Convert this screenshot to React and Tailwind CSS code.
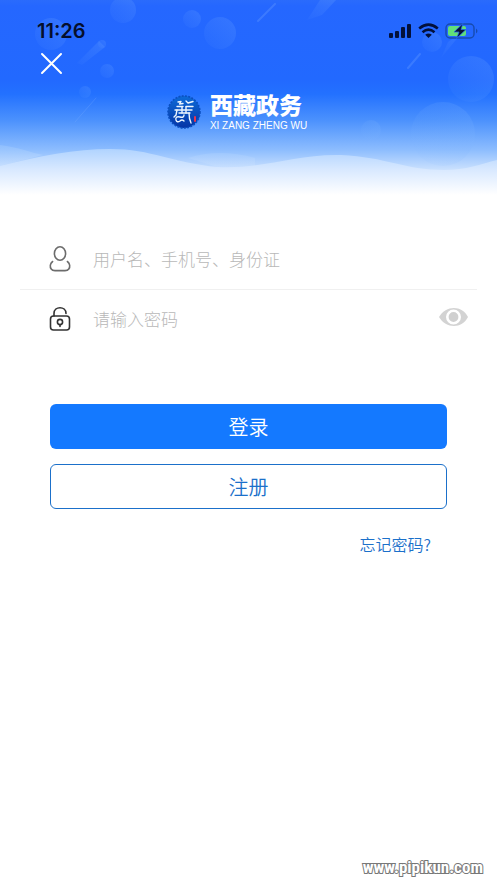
import React, { useState } from "react";

const HeaderBackground = () => (
  <svg
    className="absolute inset-0 h-full w-full"
    viewBox="0 0 497 200"
    preserveAspectRatio="none"
    aria-hidden="true"
  >
    <defs>
      <linearGradient id="sky" x1="0" y1="0" x2="0" y2="1">
        <stop offset="0" stopColor="#2a6bfc" />
        <stop offset="0.03" stopColor="#2567ff" />
        <stop offset="0.4" stopColor="#2269ff" />
        <stop offset="0.47" stopColor="#2371ff" />
        <stop offset="0.6" stopColor="#4b91fd" />
        <stop offset="0.75" stopColor="#8dbdfe" />
        <stop offset="0.85" stopColor="#cbe1fe" />
        <stop offset="0.97" stopColor="#ffffff" />
      </linearGradient>
      <linearGradient id="wave" gradientUnits="userSpaceOnUse" x1="0" y1="145" x2="0" y2="195">
        <stop offset="0" stopColor="#a8cfff" />
        <stop offset="0.5" stopColor="#d9e9ff" />
        <stop offset="1" stopColor="#ffffff" />
      </linearGradient>
      <linearGradient id="bubble" x1="1" y1="0" x2="0" y2="1">
        <stop offset="0" stopColor="#7db4ff" stopOpacity="0.2" />
        <stop offset="1" stopColor="#7db4ff" stopOpacity="0.03" />
      </linearGradient>
    </defs>
    <rect width="497" height="200" fill="url(#sky)" />
    <g fill="url(#bubble)">
      <circle cx="123" cy="10" r="13" />
      <circle cx="192" cy="19" r="9" />
      <circle cx="220" cy="33" r="16" />
      <circle cx="51" cy="34" r="16" />
      <circle cx="107" cy="71" r="7" />
      <circle cx="85" cy="92" r="6" />
      <circle cx="102" cy="44" r="4" />
      <circle cx="371" cy="130" r="10" />
      <circle cx="432" cy="42" r="10" />
      <circle cx="471" cy="79" r="23" />
      <circle cx="443" cy="134" r="32" />
      <path d="M99 41 L105 47 L82 65 L77 63Z" />
      <path d="M320 0 L336 0 L322 15 L307 20Z" />
      <path d="M448 42 L464 30 L441 58Z" />
    </g>
    <g stroke="#80b2ff" strokeLinecap="round" opacity="0.25">
      <path d="M275 4 L258 21" strokeWidth="2" />
      <path d="M420 54 L408 68" strokeWidth="2" />
      <path d="M96 98 L75 122" />
    </g>
    <path d="M0 145 C18 147 32 153 43 155 L0 166Z" fill="url(#wave)" opacity="0.35" />
    <path d="M188 158 C210 151 232 152 255 158 L255 175 L218 167Z" fill="url(#wave)" opacity="0.25" />
    <path
      d="M0 166 C38 156 76 149 110 149 C152 149 172 163 218 167 C266 169 294 154 341 155 C386 157 405 170 444 170 C466 170 481 164 497 160 L497 200 L0 200Z"
      fill="url(#wave)"
    />
  </svg>
);

const StatusIcons = () => (
  <svg className="h-5 w-24" viewBox="1 1 96 20" aria-hidden="true">
    <g fill="#03103a">
      <rect x="4" y="13" width="4" height="5" rx="1" />
      <rect x="10" y="11" width="4" height="7" rx="1" />
      <rect x="16" y="7" width="4" height="11" rx="1" />
      <rect x="22" y="4" width="4" height="14" rx="1" />
      <path d="M43.500 18 L40.200 14.800 Q43.500 12.200 46.800 14.800Z" />
    </g>
    <g fill="none" stroke="#03103a" strokeWidth="2.600">
      <path d="M34.200 8.500 Q43.500 .8 52.800 8.500" />
      <path d="M37.500 12.200 Q43.500 7.200 49.500 12.200" />
    </g>
    <rect x="61" y="4" width="28" height="14" rx="4" fill="none" stroke="#174bae" strokeWidth="1.400" />
    <path d="M91 8.500 Q94 11 91 13.500Z" fill="#174bae" />
    <rect x="63" y="6" width="18" height="10" rx="2" fill="#62df78" />
    <path d="M78 3.500 L69 12 H74 L71.500 18.500 L81 9.500 H76Z" fill="#071431" stroke="#2769ed" strokeWidth=".8" />
  </svg>
);

const Emblem = () => (
  <svg className="h-9 w-9" viewBox="0 0 36 36" aria-hidden="true">
    <defs>
      <linearGradient id="seal" x1="0" y1="0" x2="0" y2="1">
        <stop offset="0" stopColor="#0d6bd8" />
        <stop offset="1" stopColor="#0634a6" />
      </linearGradient>
    </defs>
    <circle cx="18" cy="18" r="16" fill="url(#seal)" />
    <circle cx="18" cy="18" r="16" fill="none" stroke="#0b4fc0" strokeWidth="1.600" strokeDasharray="2 1.300" />
    <g fill="none" stroke="#eef6ff" strokeWidth="1.400" strokeLinecap="round" strokeLinejoin="round">
      <path d="M12 8 L15 7.500 L13.500 10 L17 9.500 M20 7 L22 9 L27 7.500" />
      <path d="M11 12.500 H17 M20 12.500 H27 M9 16 H26 M13 19 H24" />
      <path d="M11 16 L10 21 L8 23 M16 13 V19 M20 13 V19" />
      <path d="M18 21 Q18 24 14 23 Q9 22 10 26 Q11 29 14 27 Q16 25 18 27 M23 19 Q23 25 25 29" />
    </g>
    <rect x="28" y="22" width="2" height="6" rx="1" fill="#e63450" />
  </svg>
);

const UserIcon = () => (
  <svg className="h-7 w-6" viewBox="0 0 24 28" fill="none" stroke="#6c6c6c" strokeWidth="1.600" strokeLinecap="round" aria-hidden="true">
    <ellipse cx="12" cy="8.500" rx="5.600" ry="6.800" />
    <path d="M4.600 16.500 C1.800 18.500 1.800 22 3.200 24 Q4.300 25.600 7 25.600 H17 Q19.700 25.600 20.800 24 C22.200 22 22.200 18.500 19.400 16.500" />
  </svg>
);

const LockIcon = () => (
  <svg className="h-7 w-6" viewBox="0 0 24 28" fill="none" stroke="#333333" strokeWidth="1.600" strokeLinecap="round" aria-hidden="true">
    <rect x="2.500" y="11" width="19" height="14" rx="3" />
    <path d="M6 11 V8.500 C6 .8 18 .8 18 8.500" />
    <circle cx="12" cy="17" r="2.600" />
    <path d="M12 19.800 V21.500" />
  </svg>
);

const EyeIcon = () => (
  <svg className="h-5 w-8" viewBox="0 0 32 20" aria-hidden="true">
    <path d="M2 10 C9 -2 25 -2 31 10 C25 22 9 22 2 10Z" fill="#d3d3d3" />
    <circle cx="16.500" cy="10" r="6.200" fill="#d0d0d0" stroke="#ffffff" strokeWidth="2.600" />
  </svg>
);

export default function App() {
  const [username, setUsername] = useState("");
  const [password, setPassword] = useState("");
  const [showPassword, setShowPassword] = useState(false);

  const handleSubmit = (e) => {
    e.preventDefault();
  };

  return (
    <div className="flex min-h-screen flex-col bg-white font-['Inter','Noto_Sans_CJK_SC',sans-serif]">
      <header className="relative h-[200px]">
        <HeaderBackground />
        <div className="relative">
          <div className="flex items-center justify-between pt-[19px] pr-[15px] pl-[37px]">
            <span className="text-[20px] leading-6 font-semibold text-[#050f2c]">11:26</span>
            <StatusIcons />
          </div>
          <div className="flex px-10 pt-[9px]">
            <button type="button" aria-label="关闭" className="h-6 w-6">
              <svg className="h-6 w-6" viewBox="0 0 24 24" fill="none" stroke="white" strokeWidth="2" strokeLinecap="round">
                <path d="M2 2 L21 21 M21 2 L2 21" />
              </svg>
            </button>
          </div>
          <div className="flex items-center justify-center gap-2 pt-4 pr-6">
            <Emblem />
            <div className="text-white">
              <h1 className="font-['Liberation_Sans','Noto_Sans_CJK_SC',sans-serif] text-[23px] leading-7 font-black">西藏政务</h1>
              <p className="font-['Liberation_Sans',sans-serif] text-[10px] leading-3 whitespace-nowrap">XI ZANG ZHENG WU</p>
            </div>
          </div>
        </div>
      </header>

      <main className="flex-1">
        <form onSubmit={handleSubmit} className="pt-[29px]">
          <div className="mx-5 flex h-[61px] items-center border-b border-[#f0f0f0] pl-7">
            <label htmlFor="username" aria-label="用户名">
              <UserIcon />
            </label>
            <input
              id="username"
              type="text"
              value={username}
              onChange={(e) => setUsername(e.target.value)}
              placeholder="用户名、手机号、身份证"
              className="ml-[21px] min-w-0 flex-1 font-['Noto_Sans_CJK_SC',sans-serif] text-[17px] font-light outline-none placeholder:text-[#b8b8b8]"
            />
          </div>
          <div className="mx-5 flex h-[57px] items-center pl-7">
            <label htmlFor="password" aria-label="密码">
              <LockIcon />
            </label>
            <input
              id="password"
              type={showPassword ? "text" : "password"}
              value={password}
              onChange={(e) => setPassword(e.target.value)}
              placeholder="请输入密码"
              className="ml-[21px] min-w-0 flex-1 font-['Noto_Sans_CJK_SC',sans-serif] text-[17px] font-light outline-none placeholder:text-[#b8b8b8]"
            />
            <button
              type="button"
              aria-label="显示密码"
              onClick={() => setShowPassword(!showPassword)}
              className="mr-2 pb-1"
            >
              <EyeIcon />
            </button>
          </div>

          <div className="flex flex-col gap-[15px] px-[50px] pt-[57px] font-['Noto_Sans_CJK_SC',sans-serif]">
            <button type="submit" className="h-[45px] rounded-md bg-[#1479ff] text-[20px] font-[350] text-white">
              登录
            </button>
            <button type="button" className="h-[45px] rounded-md border border-[#1b70ca] text-[20px] font-[350] text-[#1b70ca]">
              注册
            </button>
          </div>
          <div className="flex justify-end pt-[23px] pr-[66px]">
            <a href="#forgot" className="font-['Noto_Sans_CJK_SC',sans-serif] text-[16px] leading-6 font-[350] text-[#1b70ca]">
              忘记密码?
            </a>
          </div>
        </form>
      </main>

      <footer className="flex justify-end pr-[14px] pb-1">
        <span className="font-['Roboto_Condensed','Open_Sans_Condensed','Liberation_Mono',monospace] text-[17px] leading-6 font-bold text-white [-webkit-text-stroke:2px_#777777] [paint-order:stroke]">
          www.pipikun.com
        </span>
      </footer>
    </div>
  );
}
